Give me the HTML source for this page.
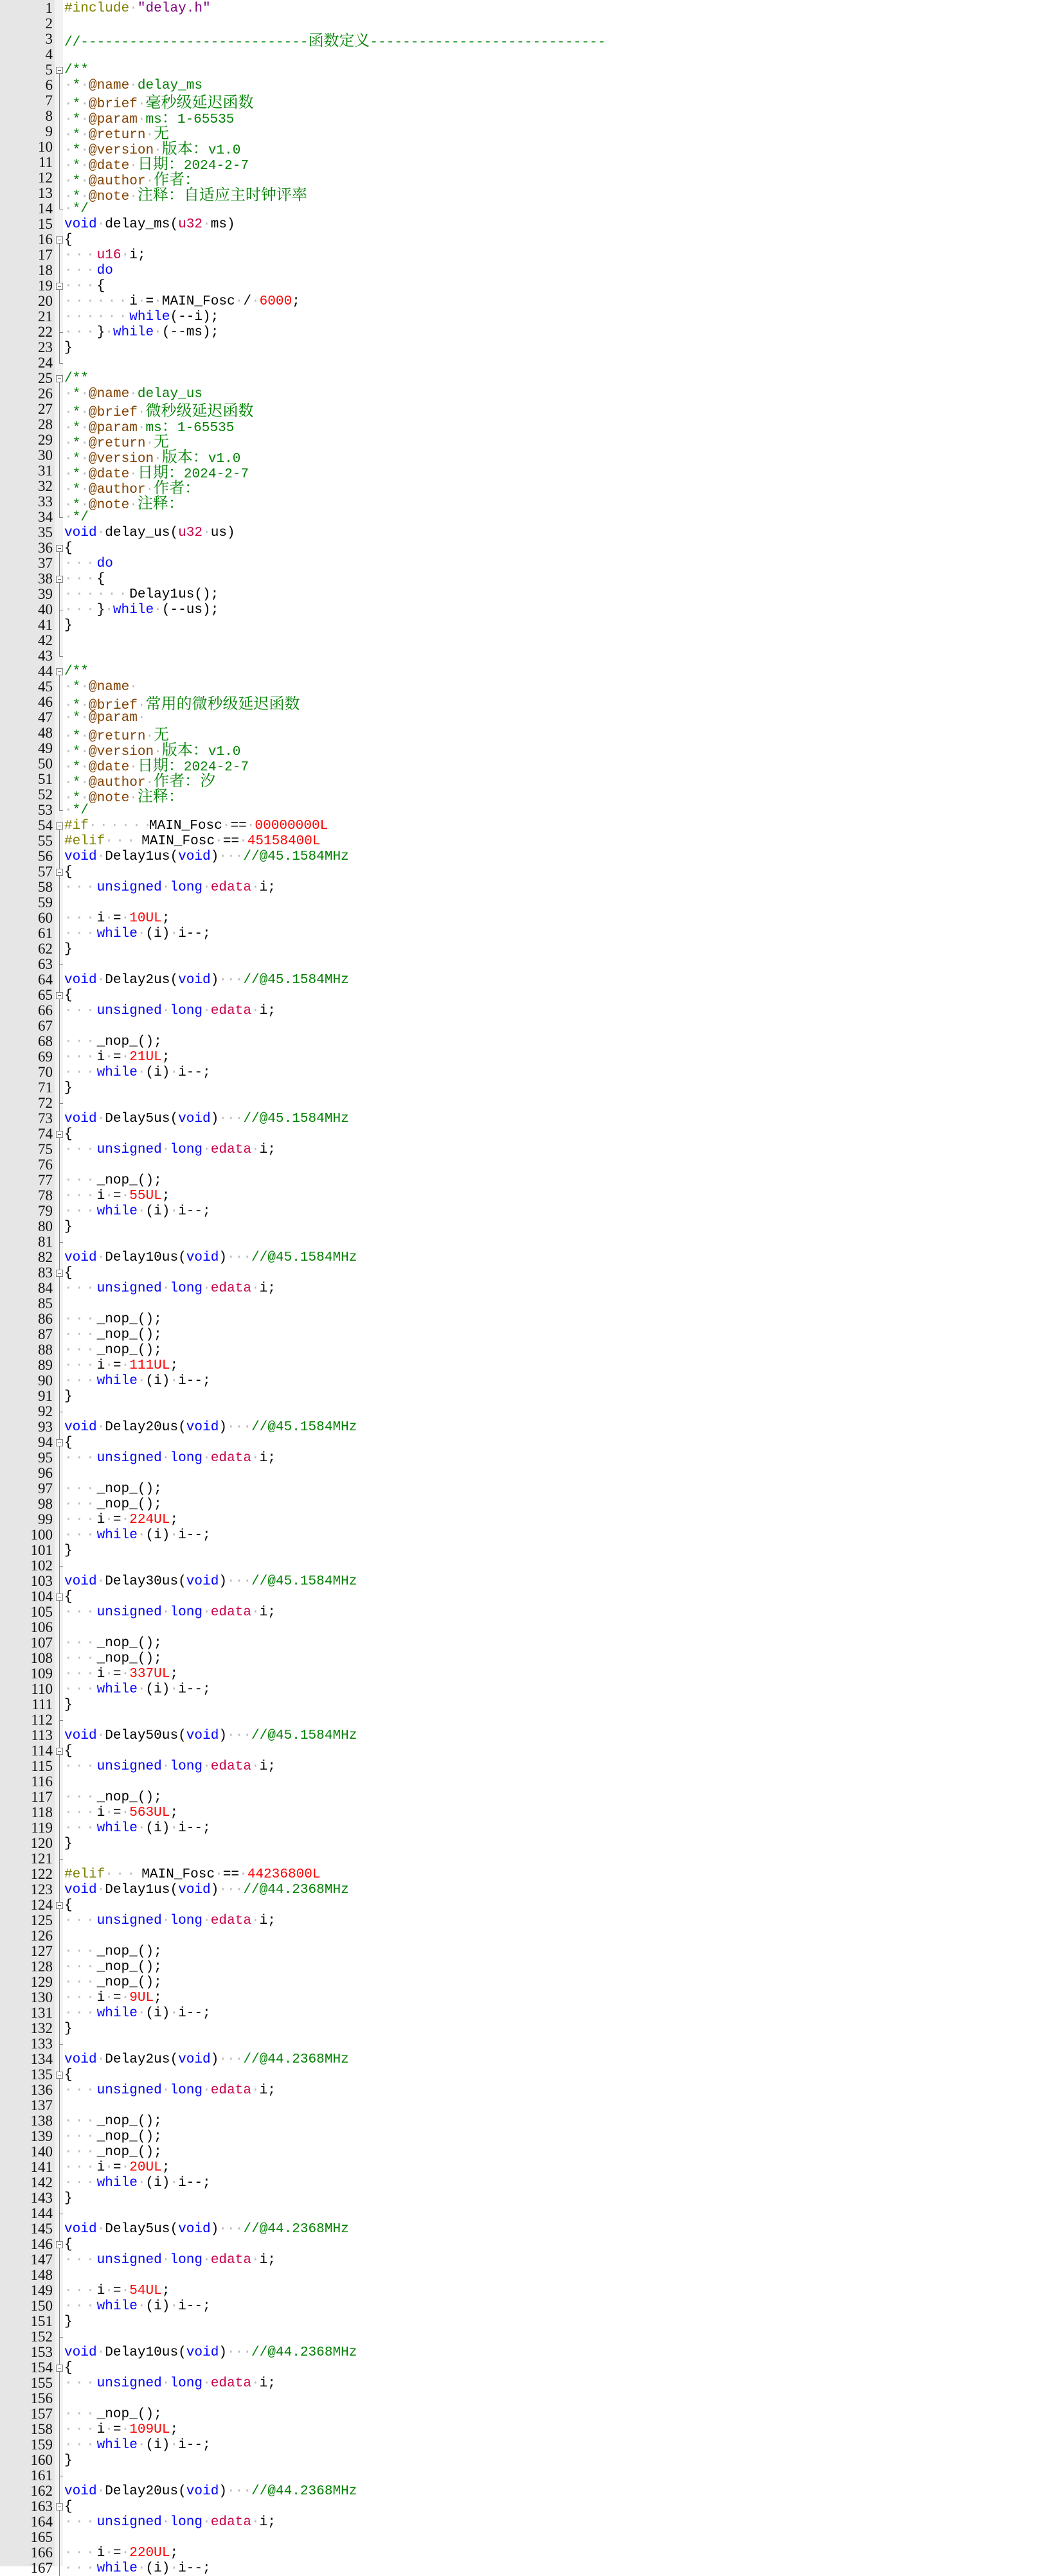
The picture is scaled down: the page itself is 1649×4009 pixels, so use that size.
<!DOCTYPE html>
<html><head><meta charset="utf-8">
<style>
html,body{margin:0;padding:0;background:#fff}
body{width:1649px;height:3994px;overflow:hidden;position:relative;padding-top:1px;box-sizing:border-box}
.gut{position:absolute;left:0;top:0;width:85px;height:3994px;background:#e6e6e6}
.fs{position:absolute;left:85px;top:0;width:13px;height:3994px;background:#f3f3f3}
.l{height:24px;position:relative;white-space:pre}
.n{position:absolute;left:0;width:82px;height:24px;text-align:right;box-sizing:border-box;font:23px/24px "Liberation Serif",serif;color:#111}
.f{position:absolute;left:85px;top:0;width:13px;height:24px}
.f::before,.f::after{content:"";position:absolute}
.v::before,.t::before,.b1::before{left:7px;top:0;height:24px;width:1px;background:#808080}
.t::after,.e::after{left:7px;top:12px;width:6px;height:1px;background:#808080}
.e::before{left:7px;top:0;height:13px;width:1px;background:#808080}
.b0::before{left:7px;top:12px;height:12px;width:1px;background:#808080}
.b0::after,.b1::after{left:2px;top:7px;width:9px;height:9px;border:1px solid #808080;background:linear-gradient(#505050,#505050) center/5px 1px no-repeat,#fff}
.c{position:absolute;left:100px;top:0;font:21.08px/24px "Liberation Mono",monospace;color:#000}
.c b{font-weight:normal;color:#b8b8b8}
.c i{font-style:normal;color:#b8b8b8;display:inline-block;width:50.6px;letter-spacing:4.4px;overflow:hidden;vertical-align:top}
.z{font-family:"Noto Serif CJK SC","Noto Sans CJK SC",serif;font-size:24px}
.k{color:#0000ff}.t2{color:#c8004a}.m{color:#ff0000}.g{color:#008000}.d{color:#804000}.p{color:#808000}.s{color:#800080}
</style></head><body>
<div class="gut"></div><div class="fs"></div>
<div class="l"><span class="n">1</span><span class="f"></span><span class="c"><span class="p">#include</span><b>·</b><span class="s">"delay.h"</span></span></div>
<div class="l"><span class="n">2</span><span class="f"></span><span class="c"></span></div>
<div class="l"><span class="n">3</span><span class="f"></span><span class="c g">//----------------------------<span class="z">函数定义</span>-----------------------------</span></div>
<div class="l"><span class="n">4</span><span class="f"></span><span class="c"></span></div>
<div class="l"><span class="n">5</span><span class="f b0"></span><span class="c g">/**</span></div>
<div class="l"><span class="n">6</span><span class="f v"></span><span class="c g"><b>·</b>*<b>·</b><span class="d">@name</span><b>·</b>delay_ms</span></div>
<div class="l"><span class="n">7</span><span class="f v"></span><span class="c g"><b>·</b>*<b>·</b><span class="d">@brief</span><b>·</b><span class="z">毫秒级延迟函数</span></span></div>
<div class="l"><span class="n">8</span><span class="f v"></span><span class="c g"><b>·</b>*<b>·</b><span class="d">@param</span><b>·</b>ms<span class="z">：</span>1-65535</span></div>
<div class="l"><span class="n">9</span><span class="f v"></span><span class="c g"><b>·</b>*<b>·</b><span class="d">@return</span><b>·</b><span class="z">无</span></span></div>
<div class="l"><span class="n">10</span><span class="f v"></span><span class="c g"><b>·</b>*<b>·</b><span class="d">@version</span><b>·</b><span class="z">版本：</span>v1.0</span></div>
<div class="l"><span class="n">11</span><span class="f v"></span><span class="c g"><b>·</b>*<b>·</b><span class="d">@date</span><b>·</b><span class="z">日期：</span>2024-2-7</span></div>
<div class="l"><span class="n">12</span><span class="f v"></span><span class="c g"><b>·</b>*<b>·</b><span class="d">@author</span><b>·</b><span class="z">作者：</span></span></div>
<div class="l"><span class="n">13</span><span class="f v"></span><span class="c g"><b>·</b>*<b>·</b><span class="d">@note</span><b>·</b><span class="z">注释：自适应主时钟评率</span></span></div>
<div class="l"><span class="n">14</span><span class="f e"></span><span class="c g"><b>·</b>*/</span></div>
<div class="l"><span class="n">15</span><span class="f"></span><span class="c"><span class="k">void</span><b>·</b>delay_ms(<span class="t2">u32</span><b>·</b>ms)</span></div>
<div class="l"><span class="n">16</span><span class="f b0"></span><span class="c">{</span></div>
<div class="l"><span class="n">17</span><span class="f v"></span><span class="c"><i>···</i><span class="t2">u16</span><b>·</b>i;</span></div>
<div class="l"><span class="n">18</span><span class="f v"></span><span class="c"><i>···</i><span class="k">do</span></span></div>
<div class="l"><span class="n">19</span><span class="f b1"></span><span class="c"><i>···</i>{</span></div>
<div class="l"><span class="n">20</span><span class="f v"></span><span class="c"><i>···</i><i>···</i>i<b>·</b>=<b>·</b>MAIN_Fosc<b>·</b>/<b>·</b><span class="m">6000</span>;</span></div>
<div class="l"><span class="n">21</span><span class="f v"></span><span class="c"><i>···</i><i>···</i><span class="k">while</span>(--i);</span></div>
<div class="l"><span class="n">22</span><span class="f t"></span><span class="c"><i>···</i>}<b>·</b><span class="k">while</span><b>·</b>(--ms);</span></div>
<div class="l"><span class="n">23</span><span class="f v"></span><span class="c">}</span></div>
<div class="l"><span class="n">24</span><span class="f e"></span><span class="c"></span></div>
<div class="l"><span class="n">25</span><span class="f b0"></span><span class="c g">/**</span></div>
<div class="l"><span class="n">26</span><span class="f v"></span><span class="c g"><b>·</b>*<b>·</b><span class="d">@name</span><b>·</b>delay_us</span></div>
<div class="l"><span class="n">27</span><span class="f v"></span><span class="c g"><b>·</b>*<b>·</b><span class="d">@brief</span><b>·</b><span class="z">微秒级延迟函数</span></span></div>
<div class="l"><span class="n">28</span><span class="f v"></span><span class="c g"><b>·</b>*<b>·</b><span class="d">@param</span><b>·</b>ms<span class="z">：</span>1-65535</span></div>
<div class="l"><span class="n">29</span><span class="f v"></span><span class="c g"><b>·</b>*<b>·</b><span class="d">@return</span><b>·</b><span class="z">无</span></span></div>
<div class="l"><span class="n">30</span><span class="f v"></span><span class="c g"><b>·</b>*<b>·</b><span class="d">@version</span><b>·</b><span class="z">版本：</span>v1.0</span></div>
<div class="l"><span class="n">31</span><span class="f v"></span><span class="c g"><b>·</b>*<b>·</b><span class="d">@date</span><b>·</b><span class="z">日期：</span>2024-2-7</span></div>
<div class="l"><span class="n">32</span><span class="f v"></span><span class="c g"><b>·</b>*<b>·</b><span class="d">@author</span><b>·</b><span class="z">作者：</span></span></div>
<div class="l"><span class="n">33</span><span class="f v"></span><span class="c g"><b>·</b>*<b>·</b><span class="d">@note</span><b>·</b><span class="z">注释：</span></span></div>
<div class="l"><span class="n">34</span><span class="f e"></span><span class="c g"><b>·</b>*/</span></div>
<div class="l"><span class="n">35</span><span class="f"></span><span class="c"><span class="k">void</span><b>·</b>delay_us(<span class="t2">u32</span><b>·</b>us)</span></div>
<div class="l"><span class="n">36</span><span class="f b0"></span><span class="c">{</span></div>
<div class="l"><span class="n">37</span><span class="f v"></span><span class="c"><i>···</i><span class="k">do</span></span></div>
<div class="l"><span class="n">38</span><span class="f b1"></span><span class="c"><i>···</i>{</span></div>
<div class="l"><span class="n">39</span><span class="f v"></span><span class="c"><i>···</i><i>···</i>Delay1us();</span></div>
<div class="l"><span class="n">40</span><span class="f t"></span><span class="c"><i>···</i>}<b>·</b><span class="k">while</span><b>·</b>(--us);</span></div>
<div class="l"><span class="n">41</span><span class="f v"></span><span class="c">}</span></div>
<div class="l"><span class="n">42</span><span class="f v"></span><span class="c"></span></div>
<div class="l"><span class="n">43</span><span class="f e"></span><span class="c"></span></div>
<div class="l"><span class="n">44</span><span class="f b0"></span><span class="c g">/**</span></div>
<div class="l"><span class="n">45</span><span class="f v"></span><span class="c g"><b>·</b>*<b>·</b><span class="d">@name</span><b>·</b></span></div>
<div class="l"><span class="n">46</span><span class="f v"></span><span class="c g"><b>·</b>*<b>·</b><span class="d">@brief</span><b>·</b><span class="z">常用的微秒级延迟函数</span></span></div>
<div class="l"><span class="n">47</span><span class="f v"></span><span class="c g"><b>·</b>*<b>·</b><span class="d">@param</span><b>·</b></span></div>
<div class="l"><span class="n">48</span><span class="f v"></span><span class="c g"><b>·</b>*<b>·</b><span class="d">@return</span><b>·</b><span class="z">无</span></span></div>
<div class="l"><span class="n">49</span><span class="f v"></span><span class="c g"><b>·</b>*<b>·</b><span class="d">@version</span><b>·</b><span class="z">版本：</span>v1.0</span></div>
<div class="l"><span class="n">50</span><span class="f v"></span><span class="c g"><b>·</b>*<b>·</b><span class="d">@date</span><b>·</b><span class="z">日期：</span>2024-2-7</span></div>
<div class="l"><span class="n">51</span><span class="f v"></span><span class="c g"><b>·</b>*<b>·</b><span class="d">@author</span><b>·</b><span class="z">作者：汐</span></span></div>
<div class="l"><span class="n">52</span><span class="f v"></span><span class="c g"><b>·</b>*<b>·</b><span class="d">@note</span><b>·</b><span class="z">注释：</span></span></div>
<div class="l"><span class="n">53</span><span class="f e"></span><span class="c g"><b>·</b>*/</span></div>
<div class="l"><span class="n">54</span><span class="f b0"></span><span class="c"><span class="p">#if</span><i style="width:94px">·······</i>MAIN_Fosc<b>·</b>==<b>·</b><span class="m">00000000L</span></span></div>
<div class="l"><span class="n">55</span><span class="f v"></span><span class="c"><span class="p">#elif</span><i style="width:57px">····</i>MAIN_Fosc<b>·</b>==<b>·</b><span class="m">45158400L</span></span></div>
<div class="l"><span class="n">56</span><span class="f v"></span><span class="c"><span class="k">void</span><b>·</b>Delay1us(<span class="k">void</span>)<b>···</b><span class="g">//@45.1584MHz</span></span></div>
<div class="l"><span class="n">57</span><span class="f b1"></span><span class="c">{</span></div>
<div class="l"><span class="n">58</span><span class="f v"></span><span class="c"><i>···</i><span class="k">unsigned</span><b>·</b><span class="k">long</span><b>·</b><span class="t2">edata</span><b>·</b>i;</span></div>
<div class="l"><span class="n">59</span><span class="f v"></span><span class="c"></span></div>
<div class="l"><span class="n">60</span><span class="f v"></span><span class="c"><i>···</i>i<b>·</b>=<b>·</b><span class="m">10UL</span>;</span></div>
<div class="l"><span class="n">61</span><span class="f v"></span><span class="c"><i>···</i><span class="k">while</span><b>·</b>(i)<b>·</b>i--;</span></div>
<div class="l"><span class="n">62</span><span class="f v"></span><span class="c">}</span></div>
<div class="l"><span class="n">63</span><span class="f t"></span><span class="c"></span></div>
<div class="l"><span class="n">64</span><span class="f v"></span><span class="c"><span class="k">void</span><b>·</b>Delay2us(<span class="k">void</span>)<b>···</b><span class="g">//@45.1584MHz</span></span></div>
<div class="l"><span class="n">65</span><span class="f b1"></span><span class="c">{</span></div>
<div class="l"><span class="n">66</span><span class="f v"></span><span class="c"><i>···</i><span class="k">unsigned</span><b>·</b><span class="k">long</span><b>·</b><span class="t2">edata</span><b>·</b>i;</span></div>
<div class="l"><span class="n">67</span><span class="f v"></span><span class="c"></span></div>
<div class="l"><span class="n">68</span><span class="f v"></span><span class="c"><i>···</i>_nop_();</span></div>
<div class="l"><span class="n">69</span><span class="f v"></span><span class="c"><i>···</i>i<b>·</b>=<b>·</b><span class="m">21UL</span>;</span></div>
<div class="l"><span class="n">70</span><span class="f v"></span><span class="c"><i>···</i><span class="k">while</span><b>·</b>(i)<b>·</b>i--;</span></div>
<div class="l"><span class="n">71</span><span class="f v"></span><span class="c">}</span></div>
<div class="l"><span class="n">72</span><span class="f t"></span><span class="c"></span></div>
<div class="l"><span class="n">73</span><span class="f v"></span><span class="c"><span class="k">void</span><b>·</b>Delay5us(<span class="k">void</span>)<b>···</b><span class="g">//@45.1584MHz</span></span></div>
<div class="l"><span class="n">74</span><span class="f b1"></span><span class="c">{</span></div>
<div class="l"><span class="n">75</span><span class="f v"></span><span class="c"><i>···</i><span class="k">unsigned</span><b>·</b><span class="k">long</span><b>·</b><span class="t2">edata</span><b>·</b>i;</span></div>
<div class="l"><span class="n">76</span><span class="f v"></span><span class="c"></span></div>
<div class="l"><span class="n">77</span><span class="f v"></span><span class="c"><i>···</i>_nop_();</span></div>
<div class="l"><span class="n">78</span><span class="f v"></span><span class="c"><i>···</i>i<b>·</b>=<b>·</b><span class="m">55UL</span>;</span></div>
<div class="l"><span class="n">79</span><span class="f v"></span><span class="c"><i>···</i><span class="k">while</span><b>·</b>(i)<b>·</b>i--;</span></div>
<div class="l"><span class="n">80</span><span class="f v"></span><span class="c">}</span></div>
<div class="l"><span class="n">81</span><span class="f t"></span><span class="c"></span></div>
<div class="l"><span class="n">82</span><span class="f v"></span><span class="c"><span class="k">void</span><b>·</b>Delay10us(<span class="k">void</span>)<b>···</b><span class="g">//@45.1584MHz</span></span></div>
<div class="l"><span class="n">83</span><span class="f b1"></span><span class="c">{</span></div>
<div class="l"><span class="n">84</span><span class="f v"></span><span class="c"><i>···</i><span class="k">unsigned</span><b>·</b><span class="k">long</span><b>·</b><span class="t2">edata</span><b>·</b>i;</span></div>
<div class="l"><span class="n">85</span><span class="f v"></span><span class="c"></span></div>
<div class="l"><span class="n">86</span><span class="f v"></span><span class="c"><i>···</i>_nop_();</span></div>
<div class="l"><span class="n">87</span><span class="f v"></span><span class="c"><i>···</i>_nop_();</span></div>
<div class="l"><span class="n">88</span><span class="f v"></span><span class="c"><i>···</i>_nop_();</span></div>
<div class="l"><span class="n">89</span><span class="f v"></span><span class="c"><i>···</i>i<b>·</b>=<b>·</b><span class="m">111UL</span>;</span></div>
<div class="l"><span class="n">90</span><span class="f v"></span><span class="c"><i>···</i><span class="k">while</span><b>·</b>(i)<b>·</b>i--;</span></div>
<div class="l"><span class="n">91</span><span class="f v"></span><span class="c">}</span></div>
<div class="l"><span class="n">92</span><span class="f t"></span><span class="c"></span></div>
<div class="l"><span class="n">93</span><span class="f v"></span><span class="c"><span class="k">void</span><b>·</b>Delay20us(<span class="k">void</span>)<b>···</b><span class="g">//@45.1584MHz</span></span></div>
<div class="l"><span class="n">94</span><span class="f b1"></span><span class="c">{</span></div>
<div class="l"><span class="n">95</span><span class="f v"></span><span class="c"><i>···</i><span class="k">unsigned</span><b>·</b><span class="k">long</span><b>·</b><span class="t2">edata</span><b>·</b>i;</span></div>
<div class="l"><span class="n">96</span><span class="f v"></span><span class="c"></span></div>
<div class="l"><span class="n">97</span><span class="f v"></span><span class="c"><i>···</i>_nop_();</span></div>
<div class="l"><span class="n">98</span><span class="f v"></span><span class="c"><i>···</i>_nop_();</span></div>
<div class="l"><span class="n">99</span><span class="f v"></span><span class="c"><i>···</i>i<b>·</b>=<b>·</b><span class="m">224UL</span>;</span></div>
<div class="l"><span class="n">100</span><span class="f v"></span><span class="c"><i>···</i><span class="k">while</span><b>·</b>(i)<b>·</b>i--;</span></div>
<div class="l"><span class="n">101</span><span class="f v"></span><span class="c">}</span></div>
<div class="l"><span class="n">102</span><span class="f t"></span><span class="c"></span></div>
<div class="l"><span class="n">103</span><span class="f v"></span><span class="c"><span class="k">void</span><b>·</b>Delay30us(<span class="k">void</span>)<b>···</b><span class="g">//@45.1584MHz</span></span></div>
<div class="l"><span class="n">104</span><span class="f b1"></span><span class="c">{</span></div>
<div class="l"><span class="n">105</span><span class="f v"></span><span class="c"><i>···</i><span class="k">unsigned</span><b>·</b><span class="k">long</span><b>·</b><span class="t2">edata</span><b>·</b>i;</span></div>
<div class="l"><span class="n">106</span><span class="f v"></span><span class="c"></span></div>
<div class="l"><span class="n">107</span><span class="f v"></span><span class="c"><i>···</i>_nop_();</span></div>
<div class="l"><span class="n">108</span><span class="f v"></span><span class="c"><i>···</i>_nop_();</span></div>
<div class="l"><span class="n">109</span><span class="f v"></span><span class="c"><i>···</i>i<b>·</b>=<b>·</b><span class="m">337UL</span>;</span></div>
<div class="l"><span class="n">110</span><span class="f v"></span><span class="c"><i>···</i><span class="k">while</span><b>·</b>(i)<b>·</b>i--;</span></div>
<div class="l"><span class="n">111</span><span class="f v"></span><span class="c">}</span></div>
<div class="l"><span class="n">112</span><span class="f t"></span><span class="c"></span></div>
<div class="l"><span class="n">113</span><span class="f v"></span><span class="c"><span class="k">void</span><b>·</b>Delay50us(<span class="k">void</span>)<b>···</b><span class="g">//@45.1584MHz</span></span></div>
<div class="l"><span class="n">114</span><span class="f b1"></span><span class="c">{</span></div>
<div class="l"><span class="n">115</span><span class="f v"></span><span class="c"><i>···</i><span class="k">unsigned</span><b>·</b><span class="k">long</span><b>·</b><span class="t2">edata</span><b>·</b>i;</span></div>
<div class="l"><span class="n">116</span><span class="f v"></span><span class="c"></span></div>
<div class="l"><span class="n">117</span><span class="f v"></span><span class="c"><i>···</i>_nop_();</span></div>
<div class="l"><span class="n">118</span><span class="f v"></span><span class="c"><i>···</i>i<b>·</b>=<b>·</b><span class="m">563UL</span>;</span></div>
<div class="l"><span class="n">119</span><span class="f v"></span><span class="c"><i>···</i><span class="k">while</span><b>·</b>(i)<b>·</b>i--;</span></div>
<div class="l"><span class="n">120</span><span class="f v"></span><span class="c">}</span></div>
<div class="l"><span class="n">121</span><span class="f t"></span><span class="c"></span></div>
<div class="l"><span class="n">122</span><span class="f v"></span><span class="c"><span class="p">#elif</span><i style="width:57px">····</i>MAIN_Fosc<b>·</b>==<b>·</b><span class="m">44236800L</span></span></div>
<div class="l"><span class="n">123</span><span class="f v"></span><span class="c"><span class="k">void</span><b>·</b>Delay1us(<span class="k">void</span>)<b>···</b><span class="g">//@44.2368MHz</span></span></div>
<div class="l"><span class="n">124</span><span class="f b1"></span><span class="c">{</span></div>
<div class="l"><span class="n">125</span><span class="f v"></span><span class="c"><i>···</i><span class="k">unsigned</span><b>·</b><span class="k">long</span><b>·</b><span class="t2">edata</span><b>·</b>i;</span></div>
<div class="l"><span class="n">126</span><span class="f v"></span><span class="c"></span></div>
<div class="l"><span class="n">127</span><span class="f v"></span><span class="c"><i>···</i>_nop_();</span></div>
<div class="l"><span class="n">128</span><span class="f v"></span><span class="c"><i>···</i>_nop_();</span></div>
<div class="l"><span class="n">129</span><span class="f v"></span><span class="c"><i>···</i>_nop_();</span></div>
<div class="l"><span class="n">130</span><span class="f v"></span><span class="c"><i>···</i>i<b>·</b>=<b>·</b><span class="m">9UL</span>;</span></div>
<div class="l"><span class="n">131</span><span class="f v"></span><span class="c"><i>···</i><span class="k">while</span><b>·</b>(i)<b>·</b>i--;</span></div>
<div class="l"><span class="n">132</span><span class="f v"></span><span class="c">}</span></div>
<div class="l"><span class="n">133</span><span class="f t"></span><span class="c"></span></div>
<div class="l"><span class="n">134</span><span class="f v"></span><span class="c"><span class="k">void</span><b>·</b>Delay2us(<span class="k">void</span>)<b>···</b><span class="g">//@44.2368MHz</span></span></div>
<div class="l"><span class="n">135</span><span class="f b1"></span><span class="c">{</span></div>
<div class="l"><span class="n">136</span><span class="f v"></span><span class="c"><i>···</i><span class="k">unsigned</span><b>·</b><span class="k">long</span><b>·</b><span class="t2">edata</span><b>·</b>i;</span></div>
<div class="l"><span class="n">137</span><span class="f v"></span><span class="c"></span></div>
<div class="l"><span class="n">138</span><span class="f v"></span><span class="c"><i>···</i>_nop_();</span></div>
<div class="l"><span class="n">139</span><span class="f v"></span><span class="c"><i>···</i>_nop_();</span></div>
<div class="l"><span class="n">140</span><span class="f v"></span><span class="c"><i>···</i>_nop_();</span></div>
<div class="l"><span class="n">141</span><span class="f v"></span><span class="c"><i>···</i>i<b>·</b>=<b>·</b><span class="m">20UL</span>;</span></div>
<div class="l"><span class="n">142</span><span class="f v"></span><span class="c"><i>···</i><span class="k">while</span><b>·</b>(i)<b>·</b>i--;</span></div>
<div class="l"><span class="n">143</span><span class="f v"></span><span class="c">}</span></div>
<div class="l"><span class="n">144</span><span class="f t"></span><span class="c"></span></div>
<div class="l"><span class="n">145</span><span class="f v"></span><span class="c"><span class="k">void</span><b>·</b>Delay5us(<span class="k">void</span>)<b>···</b><span class="g">//@44.2368MHz</span></span></div>
<div class="l"><span class="n">146</span><span class="f b1"></span><span class="c">{</span></div>
<div class="l"><span class="n">147</span><span class="f v"></span><span class="c"><i>···</i><span class="k">unsigned</span><b>·</b><span class="k">long</span><b>·</b><span class="t2">edata</span><b>·</b>i;</span></div>
<div class="l"><span class="n">148</span><span class="f v"></span><span class="c"></span></div>
<div class="l"><span class="n">149</span><span class="f v"></span><span class="c"><i>···</i>i<b>·</b>=<b>·</b><span class="m">54UL</span>;</span></div>
<div class="l"><span class="n">150</span><span class="f v"></span><span class="c"><i>···</i><span class="k">while</span><b>·</b>(i)<b>·</b>i--;</span></div>
<div class="l"><span class="n">151</span><span class="f v"></span><span class="c">}</span></div>
<div class="l"><span class="n">152</span><span class="f t"></span><span class="c"></span></div>
<div class="l"><span class="n">153</span><span class="f v"></span><span class="c"><span class="k">void</span><b>·</b>Delay10us(<span class="k">void</span>)<b>···</b><span class="g">//@44.2368MHz</span></span></div>
<div class="l"><span class="n">154</span><span class="f b1"></span><span class="c">{</span></div>
<div class="l"><span class="n">155</span><span class="f v"></span><span class="c"><i>···</i><span class="k">unsigned</span><b>·</b><span class="k">long</span><b>·</b><span class="t2">edata</span><b>·</b>i;</span></div>
<div class="l"><span class="n">156</span><span class="f v"></span><span class="c"></span></div>
<div class="l"><span class="n">157</span><span class="f v"></span><span class="c"><i>···</i>_nop_();</span></div>
<div class="l"><span class="n">158</span><span class="f v"></span><span class="c"><i>···</i>i<b>·</b>=<b>·</b><span class="m">109UL</span>;</span></div>
<div class="l"><span class="n">159</span><span class="f v"></span><span class="c"><i>···</i><span class="k">while</span><b>·</b>(i)<b>·</b>i--;</span></div>
<div class="l"><span class="n">160</span><span class="f v"></span><span class="c">}</span></div>
<div class="l"><span class="n">161</span><span class="f t"></span><span class="c"></span></div>
<div class="l"><span class="n">162</span><span class="f v"></span><span class="c"><span class="k">void</span><b>·</b>Delay20us(<span class="k">void</span>)<b>···</b><span class="g">//@44.2368MHz</span></span></div>
<div class="l"><span class="n">163</span><span class="f b1"></span><span class="c">{</span></div>
<div class="l"><span class="n">164</span><span class="f v"></span><span class="c"><i>···</i><span class="k">unsigned</span><b>·</b><span class="k">long</span><b>·</b><span class="t2">edata</span><b>·</b>i;</span></div>
<div class="l"><span class="n">165</span><span class="f v"></span><span class="c"></span></div>
<div class="l"><span class="n">166</span><span class="f v"></span><span class="c"><i>···</i>i<b>·</b>=<b>·</b><span class="m">220UL</span>;</span></div>
<div class="l"><span class="n">167</span><span class="f v"></span><span class="c"><i>···</i><span class="k">while</span><b>·</b>(i)<b>·</b>i--;</span></div>
</body></html>
